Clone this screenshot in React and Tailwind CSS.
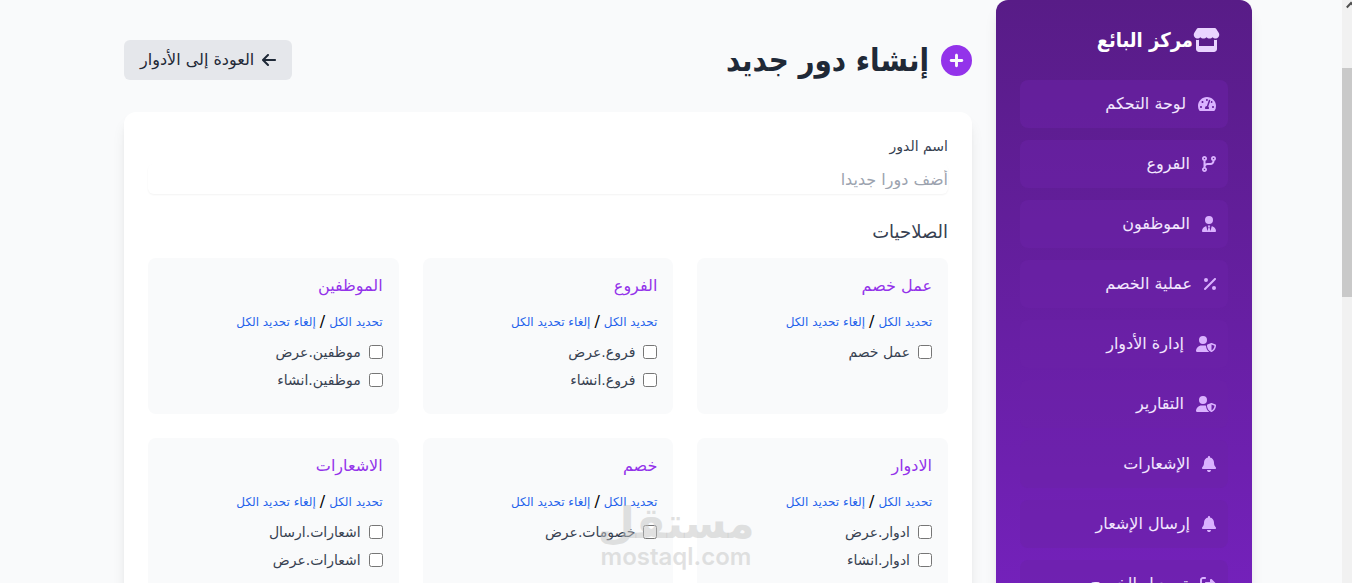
import React, { useState } from 'react';
import { FaTachometerAlt } from 'react-icons/fa';
import {
    FaStore,
    FaCodeBranch,
    FaUserTie,
    FaPercent,
    FaUserShield,
    FaBell,
    FaRightFromBracket,
    FaArrowLeft,
    FaCirclePlus,
} from 'react-icons/fa6';

const menu = [
    { name: 'لوحة التحكم', href: '#dashboard', icon: FaTachometerAlt, width: 'w-[18px]' },
    { name: 'الفروع', href: '#branches', icon: FaCodeBranch, width: 'w-3.5' },
    { name: 'الموظفون', href: '#employees', icon: FaUserTie, width: 'w-3.5' },
    { name: 'عملية الخصم', href: '#discount', icon: FaPercent, width: 'w-3' },
    { name: 'إدارة الأدوار', href: '#roles', icon: FaUserShield, width: 'w-5' },
    { name: 'التقارير', href: '#reports', icon: FaUserShield, width: 'w-5' },
    { name: 'الإشعارات', href: '#notifications', icon: FaBell, width: 'w-3.5' },
    { name: 'إرسال الإشعار', href: '#send', icon: FaBell, width: 'w-3.5' },
    { name: 'تسجيل الخروج', href: '#logout', icon: FaRightFromBracket, width: 'w-4' },
];

const groups = [
    { title: 'عمل خصم', permissions: ['عمل خصم'] },
    { title: 'الفروع', permissions: ['فروع.عرض', 'فروع.انشاء'] },
    { title: 'الموظفين', permissions: ['موظفين.عرض', 'موظفين.انشاء'] },
    { title: 'الادوار', permissions: ['ادوار.عرض', 'ادوار.انشاء'] },
    { title: 'خصم', permissions: ['خصومات.عرض'] },
    { title: 'الاشعارات', permissions: ['اشعارات.ارسال', 'اشعارات.عرض'] },
];

function Sidebar() {
    return (
        <aside className="w-64 shrink-0 min-h-[800px] p-6 rounded-xl shadow-lg bg-linear-to-b from-[#581c87] to-[#7e22ce]">
            <div className="flex items-center h-8 px-2 mb-6">
                <FaStore className="h-6 w-[27px] text-purple-200" />
                <h2 className="text-xl font-bold text-white font-['DejaVu_Sans_Condensed','DejaVu_Sans',sans-serif]">مركز البائع</h2>
            </div>
            <nav className="flex flex-col gap-3">
                {menu.map((item) => (
                    <a
                        key={item.name}
                        href={item.href}
                        className="flex items-center gap-3 p-3 rounded-lg bg-[#6b21a8]/50 text-purple-100 hover:bg-purple-700"
                    >
                        <item.icon className={`h-4 shrink-0 text-purple-300 ${item.width}`} />
                        <span>{item.name}</span>
                    </a>
                ))}
            </nav>
        </aside>
    );
}

function PermissionGroup({ title, permissions, selected, setSelected }) {
    const toggle = (permission) => {
        setSelected((prev) =>
            prev.includes(permission)
                ? prev.filter((p) => p !== permission)
                : [...prev, permission]
        );
    };

    const selectAll = () => {
        setSelected((prev) => [...new Set([...prev, ...permissions])]);
    };

    const clearAll = () => {
        setSelected((prev) => prev.filter((p) => !permissions.includes(p)));
    };

    return (
        <div className="p-4 rounded-lg bg-[#f9fafb]">
            <h3 className="mb-3 text-[#9333ea]">{title}</h3>
            <div className="flex items-center gap-1 h-6 mb-2">
                <button type="button" onClick={selectAll} className="text-xs text-[#2563eb] hover:underline">تحديد الكل</button>
                <span className="text-black">/</span>
                <button type="button" onClick={clearAll} className="text-xs text-[#2563eb] hover:underline">إلغاء تحديد الكل</button>
            </div>
            {permissions.map((permission) => (
                <label key={permission} className="flex items-center gap-2 mb-2 text-sm text-[#374151]">
                    <input
                        type="checkbox"
                        className="w-3.5 h-3.5"
                        checked={selected.includes(permission)}
                        onChange={() => toggle(permission)}
                    />
                    <span>{permission}</span>
                </label>
            ))}
        </div>
    );
}

export default function App() {
    const [roleName, setRoleName] = useState('');
    const [selected, setSelected] = useState([]);

    return (
        <div dir="rtl" className="relative h-screen overflow-hidden bg-[#f9fafb] font-['DejaVu_Sans',sans-serif]">
            <div className="flex items-start max-w-6xl mx-auto">
                <Sidebar />

                <main className="flex-1 px-6 pt-10">
                    <div className="flex items-center justify-between mb-8">
                        <h1 className="flex items-center gap-3 text-[31px] leading-10 font-bold text-[#1f2937] font-['DejaVu_Sans_Condensed','DejaVu_Sans',sans-serif]">
                            <FaCirclePlus className="text-[#9333ea]" />
                            إنشاء دور جديد
                        </h1>
                        <a href="#roles" className="flex items-center gap-2 px-4 py-2 rounded-md bg-[#e5e7eb] text-[#1f2937] hover:bg-gray-300">
                            <FaArrowLeft className="h-4 w-3.5" />
                            العودة إلى الأدوار
                        </a>
                    </div>

                    <form className="p-6 bg-white rounded-xl shadow-lg">
                        <div className="mb-6">
                            <label htmlFor="role" className="block mb-2 text-sm text-[#374151]">اسم الدور</label>
                            <input
                                id="role"
                                type="text"
                                value={roleName}
                                onChange={(e) => setRoleName(e.target.value)}
                                placeholder="أضف دورا جديدا"
                                className="block w-full h-[30px] rounded-md shadow-xs placeholder:text-[#9ca3af]"
                            />
                        </div>

                        <h2 className="mb-3 text-lg leading-7 text-[#374151]">الصلاحيات</h2>
                        <div className="grid grid-cols-3 gap-6">
                            {groups.map((group) => (
                                <PermissionGroup
                                    key={group.title}
                                    title={group.title}
                                    permissions={group.permissions}
                                    selected={selected}
                                    setSelected={setSelected}
                                />
                            ))}
                        </div>
                    </form>
                </main>
            </div>

            {/* Marca de agua */}
            <div className="absolute inset-x-0 bottom-3 flex flex-col items-center text-[#c4c4c4]/50 font-bold pointer-events-none">
                <span className="text-[43px] leading-10">مستقل</span>
                <span dir="ltr" className="text-2xl leading-7 font-semibold font-['Inter',sans-serif]">mostaql.com</span>
            </div>

            {/* Barra de desplazamiento */}
            <div className="absolute inset-y-0 right-0 w-2.5 overflow-hidden bg-[#f1f1f1]">
                <div dir="ltr" className="h-[68px] pl-1">
                    <svg width="10" height="10" viewBox="0 0 10 10" fill="none" stroke="#505050" strokeWidth="2">
                        <path d="M0.8 7.5 L5 3 L9.2 7.5" />
                    </svg>
                </div>
                <div className="h-[229px] bg-[#c9c9c9]" />
            </div>
        </div>
    );
}
